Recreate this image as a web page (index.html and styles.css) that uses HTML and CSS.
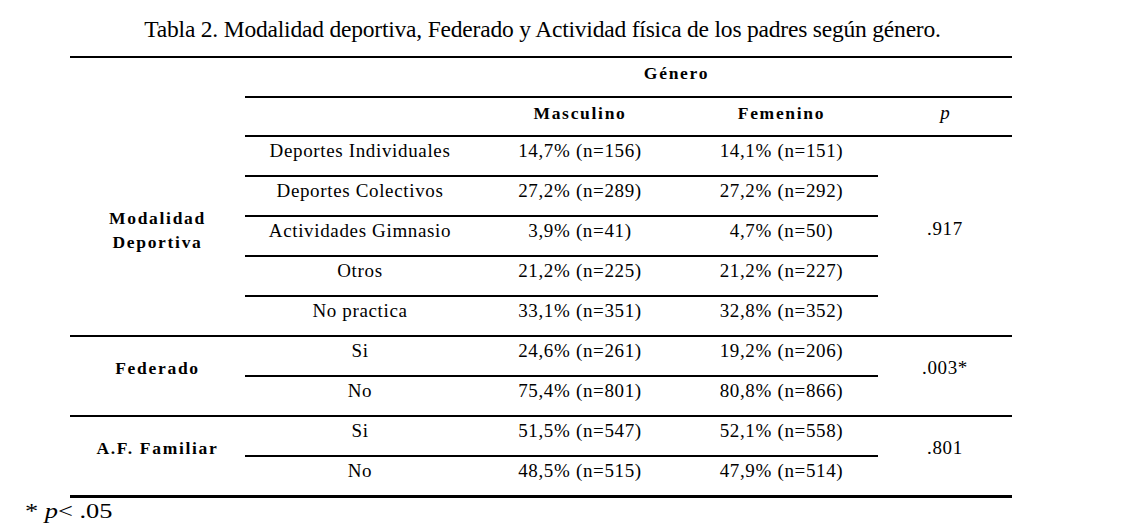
FILE: index.html
```html
<!DOCTYPE html>
<html lang="es">
<head>
<meta charset="utf-8">
<title>Tabla 2</title>
<link rel="stylesheet" href="styles.css">
</head>
<body>
<div class="page">
  <h1 class="caption">Tabla 2. Modalidad deportiva, Federado y Actividad física de los padres según género.</h1>
  <table class="data">
    <colgroup>
      <col class="c0"><col class="c1"><col class="c2"><col class="c3"><col class="c4">
    </colgroup>
    <tr class="h1">
      <td class="blank" rowspan="2"></td>
      <td class="line-b"></td>
      <th class="line-b" colspan="2">Género</th>
      <td class="line-b"></td>
    </tr>
    <tr class="h2">
      <td class="line-b"></td>
      <th class="line-b">Masculino</th>
      <th class="line-b">Femenino</th>
      <th class="line-b"><i>p</i></th>
    </tr>
    <tr>
      <th class="group g-mod line-b" rowspan="5">Modalidad<br>Deportiva</th>
      <td class="line-b">Deportes Individuales</td>
      <td class="line-b">14,7% (n=156)</td>
      <td class="line-b">14,1% (n=151)</td>
      <td class="pv pv-mod line-b" rowspan="5">.917</td>
    </tr>
    <tr>
      <td class="line-b">Deportes Colectivos</td>
      <td class="line-b">27,2% (n=289)</td>
      <td class="line-b">27,2% (n=292)</td>
    </tr>
    <tr>
      <td class="line-b">Actividades Gimnasio</td>
      <td class="line-b">3,9% (n=41)</td>
      <td class="line-b">4,7% (n=50)</td>
    </tr>
    <tr>
      <td class="line-b">Otros</td>
      <td class="line-b">21,2% (n=225)</td>
      <td class="line-b">21,2% (n=227)</td>
    </tr>
    <tr>
      <td class="line-b">No practica</td>
      <td class="line-b">33,1% (n=351)</td>
      <td class="line-b">32,8% (n=352)</td>
    </tr>
    <tr>
      <th class="group line-b" rowspan="2">Federado</th>
      <td class="line-b">Si</td>
      <td class="line-b">24,6% (n=261)</td>
      <td class="line-b">19,2% (n=206)</td>
      <td class="pv line-b" rowspan="2">.003*</td>
    </tr>
    <tr>
      <td class="line-b">No</td>
      <td class="line-b">75,4% (n=801)</td>
      <td class="line-b">80,8% (n=866)</td>
    </tr>
    <tr>
      <th class="group line-last" rowspan="2">A.F. Familiar</th>
      <td class="line-b">Si</td>
      <td class="line-b">51,5% (n=547)</td>
      <td class="line-b">52,1% (n=558)</td>
      <td class="pv line-last" rowspan="2">.801</td>
    </tr>
    <tr>
      <td class="line-last">No</td>
      <td class="line-last">48,5% (n=515)</td>
      <td class="line-last">47,9% (n=514)</td>
    </tr>
  </table>
  <p class="note">* <i>p</i>&lt; .05</p>
</div>
</body>
</html>
```

FILE: styles.css
```css
html, body {
  margin: 0;
  padding: 0;
  background: #ffffff;
}

body {
  font-family: "Liberation Serif", "Times New Roman", serif;
  color: #000000;
}

.page {
  width: 1137px;
  height: 525px;
  overflow: hidden;
}

.caption {
  margin: 0;
  padding-top: 15px;
  height: 43px;
  box-sizing: border-box;
  width: 1085px;
  font-size: 23.5px;
  letter-spacing: -0.2px;
  font-weight: normal;
  line-height: 28px;
  text-align: center;
  white-space: nowrap;
}

.data {
  margin: 13px 0 0 70px;
  border-collapse: collapse;
  table-layout: fixed;
  width: 942px;
  border-top: 2px solid #000;
}

.c0 { width: 175px; }
.c1 { width: 230px; }
.c2 { width: 210px; }
.c3 { width: 193px; }
.c4 { width: 134px; }

.data tr {
  height: 40px;
}

.data tr.h2 {
  height: 39px;
}

.data td,
.data th {
  padding: 0 0 10px 0;
  text-align: center;
  vertical-align: middle;
  font-size: 19px;
  line-height: 22px;
  letter-spacing: 0.65px;
  font-weight: normal;
}

.data th {
  font-weight: bold;
  font-size: 17.5px;
  letter-spacing: 1.7px;
  padding-bottom: 8px;
}

.data th i {
  font-weight: normal;
  font-size: 19px;
  letter-spacing: 0;
}

.data .group {
  line-height: 24px;
  padding-bottom: 16px;
}

.data .g-mod {
  padding-bottom: 12px;
}

.data .pv {
  padding-bottom: 16px;
}

.data .pv-mod {
  padding-bottom: 14px;
}

.line-b {
  border-bottom: 2px solid #000;
}

.line-last {
  border-bottom: 3px solid #000;
}

.note {
  margin: 0 0 0 25px;
  font-size: 22px;
  line-height: 26px;
  transform: scaleX(1.2);
  transform-origin: left center;
  width: 200px;
}
```
